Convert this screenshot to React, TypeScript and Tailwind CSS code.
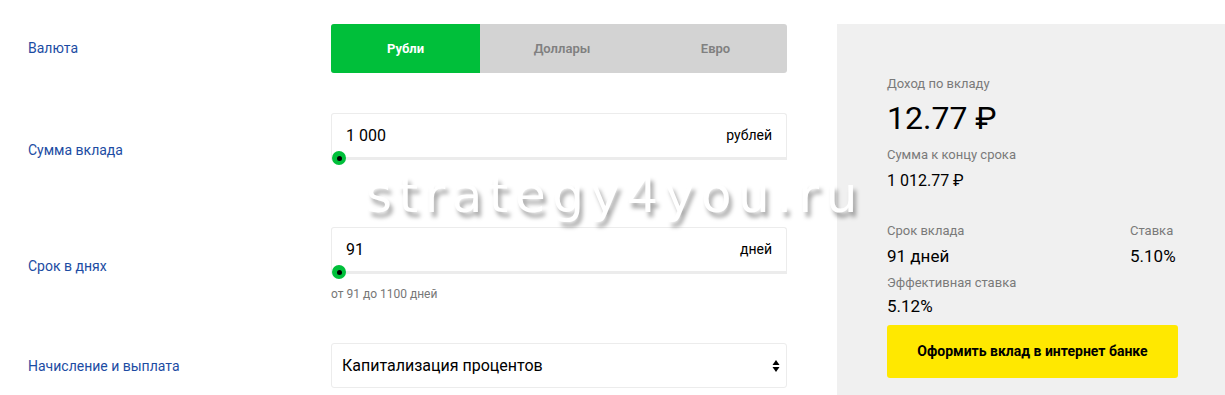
import type { ReactNode } from 'react'

const LABEL = 'text-[14px] leading-5 text-[#1c4ca3]'
const CAPTION = 'text-[13px] leading-5 text-[#7a7a7a]'
const VALUE = 'text-[16px] leading-6 text-black'

function Row({ label, labelPad, children, className }: {
  label: string
  labelPad: string
  children: ReactNode
  className?: string
}) {
  return (
    <div className={`flex ${className ?? ''}`}>
      <div className={`w-[303px] shrink-0 ${LABEL} ${labelPad}`}>{label}</div>
      <div className="w-[456px]">{children}</div>
    </div>
  )
}

// Input with the range slider lying on its lower edge
function SliderInput({ value, unit }: { value: string; unit: string }) {
  return (
    <div className="relative">
      <div className="flex h-[44px] items-center justify-between rounded-t-[3px] border border-b-0 border-[#ececec] bg-white pl-[14px] pr-[14px]">
        <span className="text-[16px] text-black">{value}</span>
        <span className="text-[14px] text-black">{unit}</span>
      </div>
      <div className="h-[3px] bg-[#ececec]" />
      <div className="absolute left-[1px] top-[38px] flex h-[14px] w-[14px] items-center justify-center rounded-full bg-[#00bf3a]">
        <div className="h-[5px] w-[5px] rounded-full bg-black" />
      </div>
    </div>
  )
}

export default function App() {
  return (
    <div className="relative h-[395px] w-[1225px] overflow-hidden bg-white font-['Roboto','Noto_Sans',sans-serif]">
      <div className="flex">
        <div className="w-[837px] shrink-0 pl-[28px]">
          <Row label="Валюта" labelPad="pt-[14px]" className="mt-[24px]">
            <div className="flex h-[49px] overflow-hidden rounded-[3px] bg-[#d3d3d3] text-[13px] font-bold">
              <div className="flex w-[149px] items-center justify-center bg-[#00bf3a] text-white">Рубли</div>
              <div className="flex w-[164px] items-center justify-center font-semibold text-[#808080]">Доллары</div>
              <div className="flex flex-1 items-center justify-center font-semibold text-[#808080]">Евро</div>
            </div>
          </Row>

          <Row label="Сумма вклада" labelPad="pt-[27px]" className="mt-[40px]">
            <SliderInput value="1 000" unit="рублей" />
          </Row>

          <Row label="Срок в днях" labelPad="pt-[29px]" className="mt-[67px]">
            <SliderInput value="91" unit="дней" />
            <div className="mt-[12px] text-[12px] leading-4 text-[#777]">от 91 до 1100 дней</div>
          </Row>

          <Row label="Начисление и выплата" labelPad="pt-[13px]" className="mt-[41px]">
            <div className="flex h-[45px] items-center justify-between rounded-[3px] border border-[#ececec] bg-white pl-[10px] pr-[6px]">
              <span className="text-[16px] text-black">Капитализация процентов</span>
              <svg width="8" height="14" viewBox="0 0 8 14">
                <path d="M4 1 L7.5 6 H0.5 Z" fill="#000" />
                <path d="M4 13 L7.5 8 H0.5 Z" fill="#000" />
              </svg>
            </div>
          </Row>
        </div>

        <div className="mt-[24px] h-[371px] flex-1 bg-[#f0f0f0] pl-[50px] pr-[47px] pt-[50px]">
          <div className={CAPTION}>Доход по вкладу</div>
          <div className="mt-[5px] text-[32px] leading-[38px] text-black">12.77 ₽</div>
          <div className={`mt-[8px] ${CAPTION}`}>Сумма к концу срока</div>
          <div className={`mt-[4px] ${VALUE}`}>1 012.77 ₽</div>

          <div className="mt-[28px] flex justify-between">
            <div>
              <div className={CAPTION}>Срок вклада</div>
              <div className={`mt-[3px] ${VALUE} text-[17px]`}>91 дней</div>
            </div>
            <div className="w-[48px]">
              <div className={CAPTION}>Ставка</div>
              <div className={`mt-[3px] ${VALUE} text-[17px]`}>5.10%</div>
            </div>
          </div>
          <div className={`mt-[5px] ${CAPTION}`}>Эффективная ставка</div>
          <div className={`mt-[1px] ${VALUE} text-[17px]`}>5.12%</div>

          <button className="mt-[7px] flex h-[53px] w-full items-center justify-center rounded-[3px] bg-[#ffe800] text-[14px] font-bold text-black">
            Оформить вклад в интернет банке
          </button>
        </div>
      </div>

      {/* watermark over the form */}
      <div className="pointer-events-none absolute left-[366px] top-[170px] font-['DejaVu_Sans',sans-serif] text-[50px] leading-[50px] tracking-[6.5px] text-white [text-shadow:3px_5px_4px_rgba(0,0,0,0.35)]">
        strategy4you.ru
      </div>
    </div>
  )
}
